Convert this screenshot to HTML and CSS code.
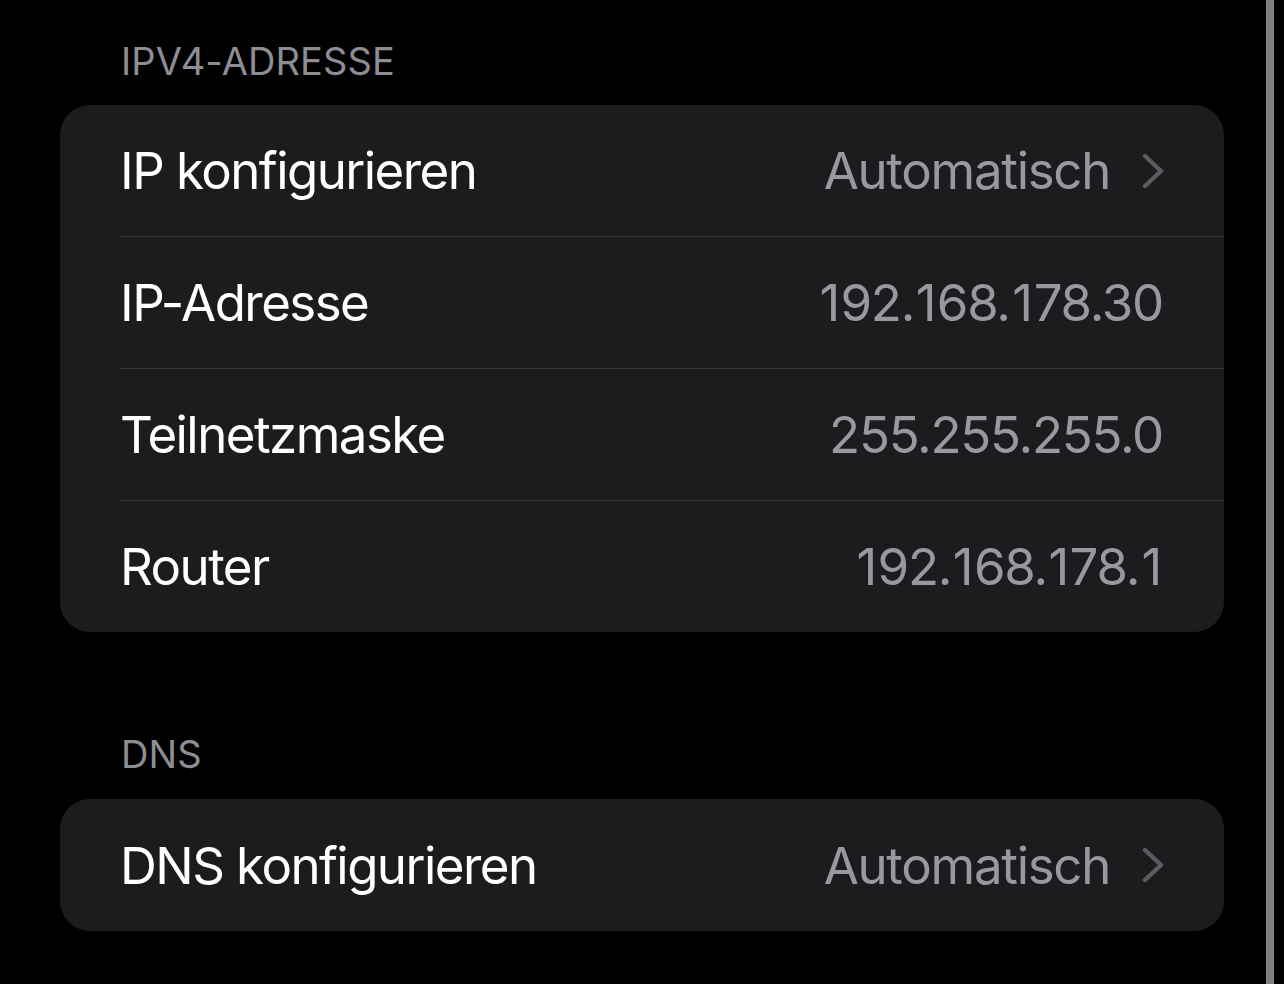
FILE: index.html
```html
<!DOCTYPE html>
<html lang="de">
<head>
<meta charset="utf-8">
<title>IPv4</title>
<link rel="stylesheet" href="styles.css">
</head>
<body>
<div class="screen">
  <main class="content">
    <h2 class="section-header first">IPV4-ADRESSE</h2>
    <section class="card">
      <div class="row">
        <div class="row-inner">
          <span class="label">IP konfigurieren</span>
          <span class="value-wrap"><span class="value">Automatisch</span><svg class="chevron" viewBox="0 0 22 36" width="22" height="36"><path d="M3 3 L19 18 L3 33" fill="none" stroke="currentColor" stroke-width="4.4" stroke-linecap="round" stroke-linejoin="round"/></svg></span>
        </div>
      </div>
      <div class="row">
        <div class="row-inner sep">
          <span class="label">IP-Adresse</span>
          <span class="value num"><span class="one">1</span>92.<span class="one">1</span>68.<span class="one">1</span>78.30</span>
        </div>
      </div>
      <div class="row">
        <div class="row-inner sep">
          <span class="label">Teilnetzmaske</span>
          <span class="value num">255.255.255.0</span>
        </div>
      </div>
      <div class="row">
        <div class="row-inner sep">
          <span class="label">Router</span>
          <span class="value num"><span class="one">1</span>92.<span class="one">1</span>68.<span class="one">1</span>78.<span class="one">1</span></span>
        </div>
      </div>
    </section>
    <h2 class="section-header second">DNS</h2>
    <section class="card">
      <div class="row">
        <div class="row-inner tall">
          <span class="label">DNS konfigurieren</span>
          <span class="value-wrap"><span class="value">Automatisch</span><svg class="chevron" viewBox="0 0 22 36" width="22" height="36"><path d="M3 3 L19 18 L3 33" fill="none" stroke="currentColor" stroke-width="4.4" stroke-linecap="round" stroke-linejoin="round"/></svg></span>
        </div>
      </div>
    </section>
  </main>
  <div class="scrollbar"></div>
</div>
</body>
</html>
```
FILE: styles.css
```css
html, body {
  margin: 0;
  padding: 0;
  background: #000;
}
body {
  font-family: Inter, "Noto Sans", "Liberation Sans", sans-serif;
  color: #fff;
  -webkit-font-smoothing: antialiased;
}
.screen {
  display: flex;
  width: 1284px;
  height: 984px;
  overflow: hidden;
}
.content {
  flex: none;
  width: 1164px;
  margin-left: 60px;
  padding-top: 38px;
}
.scrollbar {
  flex: none;
  width: 8px;
  height: 984px;
  margin-left: 42px;
  background: #808080;
}
.section-header {
  margin: 0;
  padding-left: 61px;
  height: 46px;
  line-height: 46px;
  font-size: 38px;
  font-weight: 400;
  color: #8d8d93;
  letter-spacing: 0.1px;
}
.section-header.first {
  margin-bottom: 21px;
}
.section-header.second {
  margin-top: 99px;
  margin-bottom: 22px;
}
.card {
  background: #1c1c1e;
  border-radius: 30px;
  overflow: hidden;
}
.row {
  padding-left: 60px;
}
.row-inner {
  display: flex;
  justify-content: space-between;
  align-items: center;
  height: 131px;
  padding-right: 61px;
  font-size: 51px;
  letter-spacing: -1.55px;
}
.row-inner.sep {
  border-top: 1px solid #3a3a3c;
}
.row-inner.tall {
  height: 132px;
}
.label {
  color: #fff;
}
.value {
  color: #98989f;
  letter-spacing: -1.3px;
}
.value.num {
  letter-spacing: -1.25px;
}
.one {
  padding: 0 1.6px;
}
.value.num .one:last-child {
  padding-right: 2px;
  padding-left: 2.4px;
}
.value-wrap {
  display: flex;
  align-items: center;
  gap: 32px;
}
.chevron {
  display: block;
  color: #5b5b60;
  margin-right: -1px;
}
```
